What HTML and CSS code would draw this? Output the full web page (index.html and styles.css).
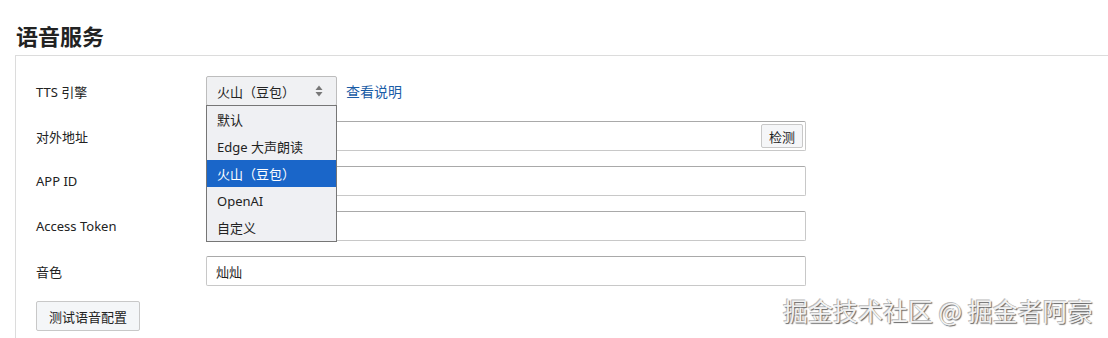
FILE: index.html
```html
<!DOCTYPE html>
<html>
    <head>
        <title>语音服务</title>
        <link rel="stylesheet" href="styles.css">
    </head>
    <body>
        <h2 class="title">语音服务</h2>
        <div class="panel">
            <div class="row">
                <label class="label">TTS 引擎</label>
                <div class="select-wrap">
                    <div class="select">
                        <span>火山（豆包）</span>
                        <svg class="arrows" width="8" height="12" viewBox="0 0 8 12">
                            <path d="M4 0.5 L7.5 5 L0.5 5 Z" fill="#777"/>
                            <path d="M4 11.5 L7.5 7 L0.5 7 Z" fill="#777"/>
                        </svg>
                    </div>
                    <ul class="dropdown">
                        <li>默认</li>
                        <li>Edge 大声朗读</li>
                        <li class="active">火山（豆包）</li>
                        <li>OpenAI</li>
                        <li>自定义</li>
                    </ul>
                </div>
                <a class="link" href="#">查看说明</a>
            </div>
            <div class="row">
                <label class="label">对外地址</label>
                <div class="input-wrap">
                    <input class="input" type="text" value="">
                    <button class="inline-btn">检测</button>
                </div>
            </div>
            <div class="row">
                <label class="label">APP ID</label>
                <input class="input" type="text" value="">
            </div>
            <div class="row">
                <label class="label">Access Token</label>
                <input class="input" type="text" value="">
            </div>
            <div class="row">
                <label class="label">音色</label>
                <input class="input" type="text" value="灿灿">
            </div>
            <div class="row">
                <button class="btn">测试语音配置</button>
            </div>
        </div>
        <div class="watermark">掘金技术社区 @ 掘金者阿豪</div>
    </body>
</html>
```

FILE: styles.css
```css
body {
    margin: 0px;
    font-family: "Noto Sans", "Noto Sans CJK SC", sans-serif;
    font-size: 13px;
    color: #222;
    background: #fff;
    overflow: hidden;
}

.title {
    margin: 0;
    padding: 20px 0 0 16px;
    height: 35px;
    font-size: 22px;
    line-height: 30px;
    font-weight: 700;
    color: #222;
    font-family: "Noto Sans CJK SC", sans-serif;
}

.panel {
    margin-left: 15px;
    border-top: 1px solid #dcdcdc;
    border-left: 1px solid #dcdcdc;
    padding: 20px 0 0 20px;
    height: 262px;
}

.row {
    display: flex;
    align-items: center;
    height: 30px;
    margin-bottom: 15px;
}

.row:last-child {
    margin-bottom: 0;
}

.label {
    width: 170px;
    flex: none;
}

.select-wrap {
    position: relative;
    width: 131px;
}

.select {
    box-sizing: border-box;
    height: 30px;
    display: flex;
    align-items: center;
    justify-content: space-between;
    padding: 0 13px 0 10px;
    border: 1px solid #bdbdbd;
    border-radius: 2px;
    background: #f0f1f3;
    font-family: "Noto Sans CJK SC", sans-serif;
}

.dropdown {
    position: absolute;
    left: 0;
    top: 29px;
    width: 131px;
    box-sizing: border-box;
    margin: 0;
    padding: 0;
    list-style: none;
    border: 1px solid #767676;
    background: #eff0f3;
    z-index: 2;
}

.dropdown li {
    height: 27px;
    line-height: 28px;
    padding-left: 10px;
    white-space: nowrap;
}

.dropdown li.active {
    background: #1a66c9;
    color: #fff;
}

.link {
    margin-left: 9px;
    color: #1a5ca6;
    text-decoration: none;
    font-size: 14px;
}

.input-wrap {
    position: relative;
    display: flex;
}

.input {
    box-sizing: border-box;
    width: 600px;
    height: 30px;
    border: 1px solid #c8c8c8;
    border-top-color: #a9a9a9;
    border-radius: 2px;
    padding: 0 9px;
    font: inherit;
    color: #222;
    outline: none;
}

.inline-btn {
    position: absolute;
    right: 3px;
    top: 3px;
    height: 24px;
    width: 42px;
    padding: 0;
    border: 1px solid #c8c8c8;
    border-radius: 2px;
    background: #f5f6f8;
    font: inherit;
    color: #222;
}

.btn {
    box-sizing: border-box;
    height: 30px;
    width: 104px;
    padding: 0;
    border: 1px solid #c8c8c8;
    border-radius: 2px;
    background: #f4f6f8;
    font: inherit;
    color: #222;
}

.watermark {
    position: absolute;
    left: 783px;
    top: 292px;
    font-family: "Noto Sans CJK SC", sans-serif;
    font-size: 25px;
    line-height: 36px;
    color: #f2f2f2;
    text-shadow: 1px 1px 1px #666, -1px -1px 0 #bbb;
    white-space: nowrap;
}
```
